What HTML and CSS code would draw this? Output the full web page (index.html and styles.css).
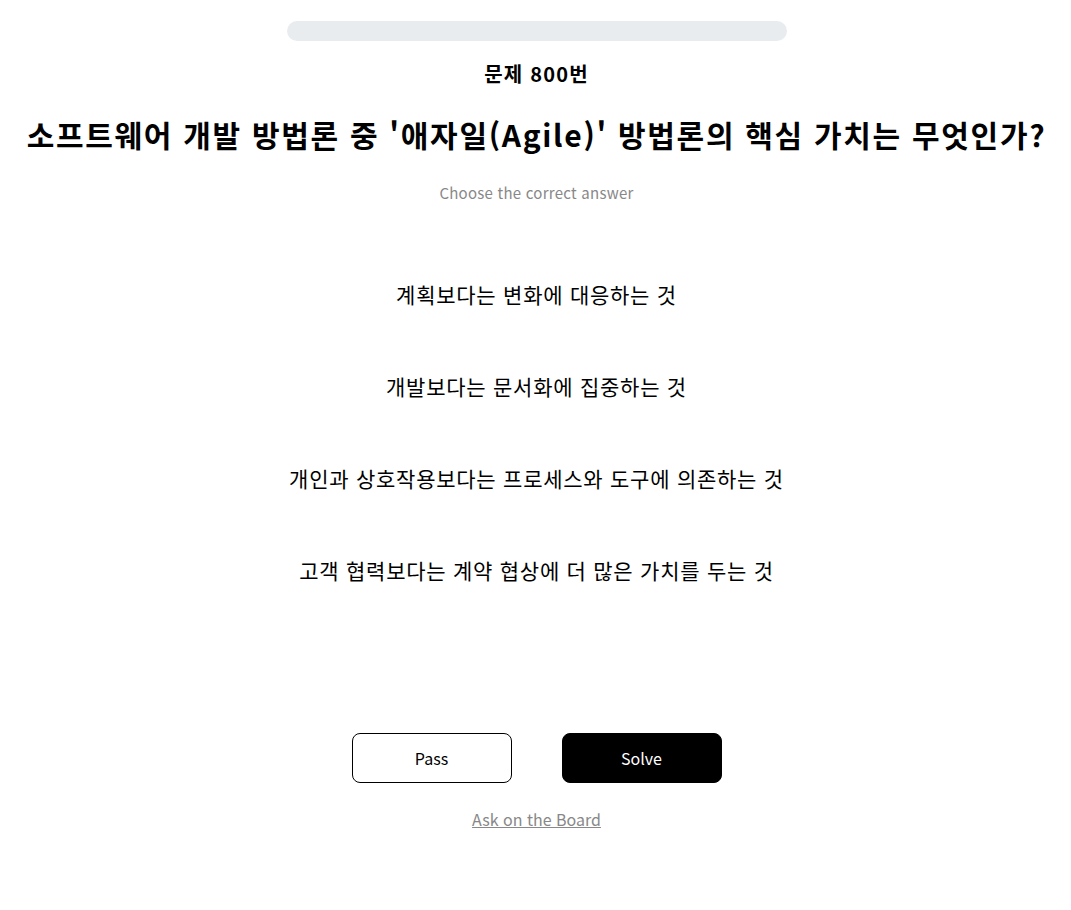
FILE: index.html
```html
<!DOCTYPE html>
<html lang="ko">
<head>
<meta charset="utf-8">
<link rel="stylesheet" href="styles.css">
</head>
<body>
<main class="page">
  <div class="progress"></div>
  <div class="qnum">문제 800번</div>
  <h1 class="title">소프트웨어 개발 방법론 중 '애자일(Agile)' 방법론의 핵심 가치는 무엇인가?</h1>
  <p class="hint">Choose the correct answer</p>
  <ul class="options">
    <li class="option">계획보다는 변화에 대응하는 것</li>
    <li class="option">개발보다는 문서화에 집중하는 것</li>
    <li class="option">개인과 상호작용보다는 프로세스와 도구에 의존하는 것</li>
    <li class="option">고객 협력보다는 계약 협상에 더 많은 가치를 두는 것</li>
  </ul>
  <div class="actions">
    <button class="btn btn-pass">Pass</button>
    <button class="btn btn-solve">Solve</button>
  </div>
  <a class="board" href="#">Ask on the Board</a>
</main>
</body>
</html>
```
FILE: styles.css
```css
* { box-sizing: border-box; }
html, body { margin: 0; padding: 0; background: #fff; }
body {
  font-family: "Noto Sans CJK KR", "Noto Sans", sans-serif;
  color: #000;
}
.page {
  display: flex;
  flex-direction: column;
  align-items: center;
  padding-top: 21px;
  padding-left: 2px;
}
.progress {
  width: 500px;
  height: 20px;
  border-radius: 10px;
  background: #e9ecef;
}
.qnum {
  margin-top: 20px;
  font-size: 20px;
  font-weight: 700;
  line-height: 26px;
  letter-spacing: 1.2px;
}
.title {
  margin: 27px 0 0;
  font-size: 30px;
  font-weight: 700;
  line-height: 40px;
  letter-spacing: 1.7px;
  white-space: nowrap;
}
.hint {
  margin: 28px 0 0;
  font-size: 15px;
  color: #888;
  line-height: 22px;
  letter-spacing: 0.25px;
}
.options {
  list-style: none;
  margin: 75px 0 0;
  padding: 0;
  display: flex;
  flex-direction: column;
  align-items: center;
  gap: 62px;
}
.option {
  font-size: 21px;
  line-height: 30px;
  letter-spacing: 0.75px;
}
.actions {
  margin-top: 148px;
  display: flex;
  gap: 50px;
}
.btn {
  width: 160px;
  height: 50px;
  border-radius: 8px;
  font-family: inherit;
  font-size: 16px;
  cursor: pointer;
}
.btn-pass {
  background: #fff;
  border: 1px solid #000;
  color: #000;
}
.btn-solve {
  background: #000;
  border: 1px solid #000;
  color: #fff;
}
.board {
  margin-top: 24px;
  font-size: 16px;
  color: #888;
  text-decoration: underline;
}
```
